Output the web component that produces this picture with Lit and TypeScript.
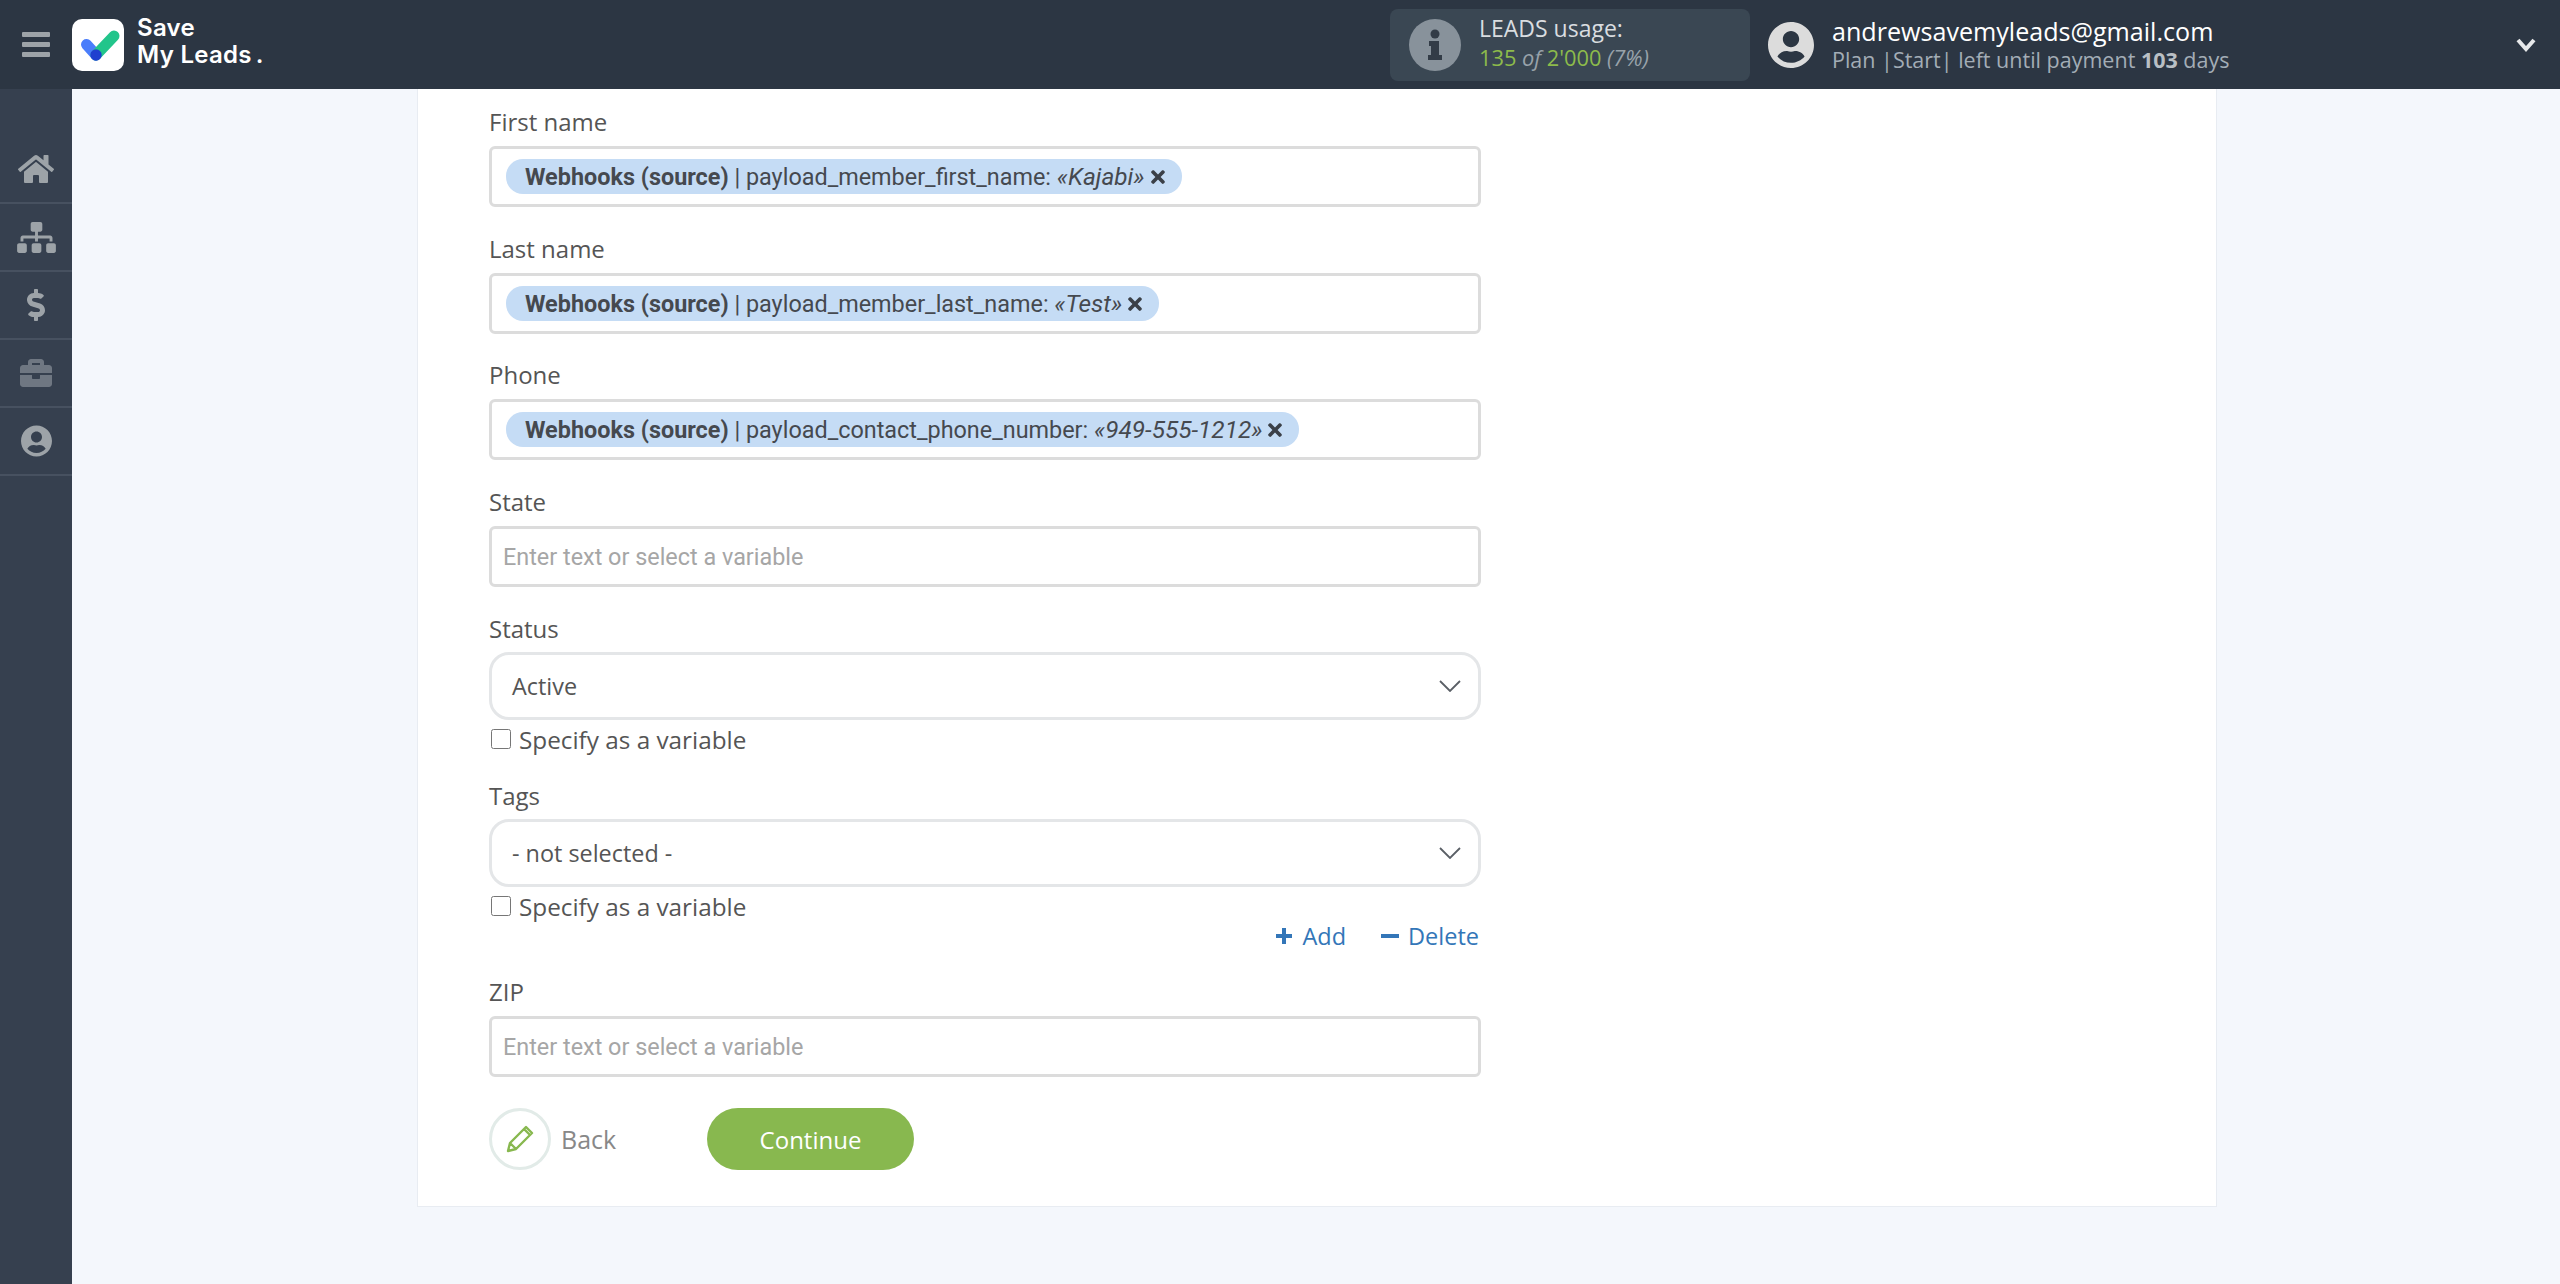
import { LitElement, html, css, svg } from "lit";
import { customElement } from "lit/decorators.js";

const ICONS = {
  home: ["0 0 576 512", "M280.37 148.26L96 300.11V464a16 16 0 0 0 16 16l112.06-.29a16 16 0 0 0 15.92-16V368a16 16 0 0 1 16-16h64a16 16 0 0 1 16 16v95.64a16 16 0 0 0 16 16.05L464 480a16 16 0 0 0 16-16V300L295.67 148.26a12.19 12.19 0 0 0-15.3 0zM571.6 251.47L488 182.56V44.05a12 12 0 0 0-12-12h-56a12 12 0 0 0-12 12v72.61L318.47 43a48 48 0 0 0-61 0L4.34 251.47a12 12 0 0 0-1.6 16.9l25.5 31A12 12 0 0 0 45.15 301l235.22-193.74a12.19 12.19 0 0 1 15.3 0L530.9 301a12 12 0 0 0 16.9-1.6l25.5-31a12 12 0 0 0-1.7-16.93z"],
  sitemap: ["0 0 640 512", "M128 352H32c-17.67 0-32 14.33-32 32v96c0 17.67 14.33 32 32 32h96c17.67 0 32-14.33 32-32v-96c0-17.67-14.33-32-32-32zm-24-80h192v48h48v-48h192v48h48v-57.59c0-21.17-17.23-38.41-38.41-38.41H344v-64h40c17.67 0 32-14.33 32-32V32c0-17.67-14.33-32-32-32H256c-17.67 0-32 14.33-32 32v96c0 17.67 14.33 32 32 32h40v64H94.41C73.23 224 56 241.23 56 262.41V320h48v-48zm264 80h-96c-17.67 0-32 14.33-32 32v96c0 17.67 14.33 32 32 32h96c17.67 0 32-14.33 32-32v-96c0-17.67-14.33-32-32-32zm240 0h-96c-17.67 0-32 14.33-32 32v96c0 17.67 14.33 32 32 32h96c17.67 0 32-14.33 32-32v-96c0-17.67-14.33-32-32-32z"],
  dollar: ["0 0 288 512", "M209.2 233.4l-108-31.6C88.7 198.2 80 186.5 80 173.5c0-16.3 13.2-29.5 29.5-29.5h66.3c12.2 0 24.2 3.7 34.2 10.5 6.1 4.1 14.3 3.1 19.5-2l34.8-34c7.1-6.9 6.1-18.4-1.8-24.5C238 74.8 207.4 64.1 176 64V16c0-8.8-7.2-16-16-16h-32c-8.8 0-16 7.2-16 16v48h-2.5C45.8 64-5.4 118.7.5 183.6c4.2 46.1 39.4 83.6 83.8 96.6l102.5 30c12.5 3.7 21.2 15.3 21.2 28.3 0 16.3-13.2 29.5-29.5 29.5h-66.3C100 368 88 364.3 78 357.5c-6.1-4.1-14.3-3.1-19.5 2l-34.8 34c-7.1 6.9-6.1 18.4 1.8 24.5 24.5 19.2 55.1 29.9 86.5 30v48c0 8.8 7.2 16 16 16h32c8.8 0 16-7.2 16-16v-48.2c46.6-.9 90.3-28.6 105.7-72.7 21.5-61.6-14.6-124.8-72.5-141.7z"],
  briefcase: ["0 0 512 512", "M320 336c0 8.84-7.16 16-16 16h-96c-8.84 0-16-7.16-16-16v-48H0v144c0 25.6 22.4 48 48 48h416c25.6 0 48-22.4 48-48V288H320v48zm144-208h-80V80c0-25.6-22.4-48-48-48H176c-25.6 0-48 22.4-48 48v48H48c-25.6 0-48 22.4-48 48v80h512v-80c0-25.6-22.4-48-48-48zm-144 0H192V96h128v32z"],
  user: ["0 0 496 512", "M248 8C111 8 0 119 0 256s111 248 248 248 248-111 248-248S385 8 248 8zm0 96c48.6 0 88 39.4 88 88s-39.4 88-88 88-88-39.4-88-88 39.4-88 88-88zm0 344c-58.7 0-111.3-26.6-146.5-68.2 18.8-35.4 55.6-59.8 98.5-59.8 2.4 0 4.8.4 7.1 1.1 13 4.2 26.6 6.9 40.9 6.9 14.3 0 28-2.7 40.9-6.9 2.3-.7 4.7-1.1 7.1-1.1 42.9 0 79.7 24.4 98.5 59.8C359.3 421.4 306.7 448 248 448z"],
  times: ["0 0 352 512", "M242.72 256l100.07-100.07c12.28-12.28 12.28-32.19 0-44.48l-22.24-22.24c-12.28-12.28-32.19-12.28-44.48 0L176 189.28 75.93 89.21c-12.28-12.28-32.19-12.28-44.48 0L9.21 111.45c-12.28 12.28-12.28 32.19 0 44.48L109.28 256 9.21 356.07c-12.28 12.28-12.28 32.19 0 44.48l22.24 22.24c12.28 12.28 32.2 12.28 44.48 0L176 322.72l100.07 100.07c12.28 12.28 32.2 12.28 44.48 0l22.24-22.24c12.28-12.28 12.28-32.19 0-44.48L242.72 256z"],
};

const icon = (name: keyof typeof ICONS, cls: string) => {
  const [vb, d] = ICONS[name];
  return html`<svg class=${cls} viewBox=${vb} fill="currentColor" aria-hidden="true">${svg`<path d=${d}></path>`}</svg>`;
};

const chevron = html`<svg class="arrow" viewBox="0 0 22 12" fill="none" stroke="#5a5f66" stroke-width="1.8" aria-hidden="true"><path d="M1 1l10 10L21 1"></path></svg>`;

@customElement("app-root")
export class AppRoot extends LitElement {
  static styles = css`
    :host { display: block; height: 1284px; overflow: hidden; background: #f4f7fc; font-family: "Open Sans", sans-serif; color: #555; }
    * { box-sizing: border-box; }
    .top { height: 89px; background: #2c3643; display: flex; align-items: center; }
    .burger { width: 72px; display: flex; flex-direction: column; align-items: center; gap: 5px; }
    .burger i { display: block; width: 28px; height: 5px; border-radius: 1px; background: #9da3a8; }
    .logo { width: 52px; height: 52px; flex: none; }
    .brand { margin-left: 13px; margin-top: -7px; font: 600 24px/27px Inter, sans-serif; color: #fff; letter-spacing: .3px; width: 200px; flex: none; }
    .brand span { margin-left: 4px; }
    .usage { margin-left: 1053px; width: 360px; height: 72px; background: #3a4753; border-radius: 8px; display: flex; align-items: center; padding-left: 19px; flex: none; }
    .info { width: 52px; height: 52px; flex: none; }
    .usage-text { margin-left: 18px; line-height: 29px; color: #d9dde0; }
    .usage-title { font-size: 23px; margin-top: -3px; }
    .usage-num { font-size: 21.8px; color: #8dbb4b; }
    .usage-num em, .usage-num .pct { color: #98a2aa; font-style: italic; }
    .avatar { width: 46px; height: 48px; margin-left: 18px; color: #dcdcdc; flex: none; }
    .acct { margin-left: 18px; margin-top: -2px; }
    .email { font-size: 25.1px; line-height: 32px; color: #fff; }
    .plan { font-size: 21.5px; line-height: 25px; color: #a3adb6; }
    .plan b { font-weight: 700; color: #b9bfc4; }
    .caret { margin-left: auto; margin-right: 24px; width: 20px; height: 14px; }
    .body { display: flex; height: 1195px; }
    .side { width: 72px; flex: none; background: #36404f; padding-top: 47px; }
    .side div { height: 68px; border-bottom: 2px solid #475160; display: flex; align-items: center; justify-content: center; color: #9da3a8; }
    .side div.dim { color: #6f7782; }
    .i-home { width: 36px; height: 32px; }
    .i-sitemap { width: 39px; height: 31px; }
    .i-dollar { width: 18px; height: 32px; }
    .i-briefcase { width: 32px; height: 32px; }
    .i-user { width: 31px; height: 32px; }
    .main { flex: 1; padding-left: 345px; }
    .card { width: 1800px; height: 1118px; background: #fff; border: 1px solid #e8ecf2; border-top: 0; padding: 17px 0 0 71px; }
    .form { width: 992px; display: flex; flex-direction: column; }
    .label { font-size: 24px; line-height: 32px; height: 32px; margin-bottom: 8px; color: #555; }
    .box { height: 61px; border: 3px solid #dcdcdc; border-radius: 6px; display: flex; align-items: center; padding: 0 11px 0 11px; margin-bottom: 26px; font: 23.4px Roboto, sans-serif; }
    .box.tight { margin-bottom: 25px; }
    .ph { color: #a6a6a6; }
    .chip { height: 35px; margin-left: 3px; border-radius: 17px; background: #c5dcf5; color: #45494f; display: inline-flex; align-items: center; padding: 0 17px 0 19px; white-space: pre; }
    .chip b { font-weight: 700; }
    .chip em { font-style: italic; font-size: 24.4px; }
    .i-times { width: 14px; height: 20px; margin-left: 6px; color: #3b4048; }
    .select { height: 68px; margin-top: -1px; margin-bottom: 1px; border: 3px solid #e4e6e8; border-radius: 20px; display: flex; align-items: center; justify-content: space-between; padding: 0 17px 1px 20px; font-size: 23.4px; color: #555; }
    .arrow { width: 22px; height: 12px; }
    .check { display: flex; align-items: center; height: 40px; margin-top: -2px; font-size: 24.3px; font-weight: 500; color: #555; }
    .check input { width: 20px; height: 20px; margin: 0 8px 0 2px; }
    .gap { height: 21px; }
    .actions { display: flex; justify-content: flex-end; align-items: center; height: 36px; padding-right: 2px; margin-top: -8px; color: #3376b8; font-size: 23.5px; gap: 35px; }
    .actions span { display: inline-flex; align-items: center; gap: 9px; }
    .actions svg { width: 18px; height: 18px; }
    .tail { height: 22px; }
    .buttons { display: flex; align-items: center; margin-top: 5px; }
    .back { width: 62px; height: 62px; border: 3px solid #e2ebe8; border-radius: 50%; display: flex; align-items: center; justify-content: center; flex: none; }
    .back svg { width: 30px; height: 30px; }
    .back-text { margin-left: 10px; font-size: 25px; color: #888; width: 146px; }
    .go { width: 207px; height: 62px; border-radius: 31px; background: #88b84f; color: #fff; font-size: 24px; display: flex; align-items: center; justify-content: center; }
  `;

  private chip(field: string, value: string) {
    return html`<span class="chip"><b>Webhooks (source)</b> | ${field}: <em>«${value}»</em>${icon("times", "i-times")}</span>`;
  }

  render() {
    return html`
      <div class="top">
        <div class="burger"><i></i><i></i><i></i></div>
        <svg class="logo" viewBox="0 0 52 52" aria-hidden="true">
          <rect width="52" height="52" rx="10" fill="#fff"></rect>
          <path d="M14.5 25.5L24 36" stroke="#4a7dfb" stroke-width="11" stroke-linecap="round" fill="none"></path>
          <path d="M24 36L42 17" stroke="#22c58b" stroke-width="11" stroke-linecap="round" fill="none"></path>
          <circle cx="24" cy="36" r="5.7" fill="#1f3fcf"></circle>
        </svg>
        <div class="brand">Save<br />My Leads<span>.</span></div>
        <div class="usage">
          <svg class="info" viewBox="0 0 52 52" aria-hidden="true">
            <circle cx="26" cy="26" r="26" fill="#88929b"></circle>
            <circle cx="26" cy="15" r="4.5" fill="#333c47"></circle>
            <path d="M20 22h10v14h3v5H19v-5h3v-9h-2z" fill="#333c47"></path>
          </svg>
          <div class="usage-text">
            <div class="usage-title">LEADS usage:</div>
            <div class="usage-num">135 <em>of</em> 2'000 <span class="pct">(7%)</span></div>
          </div>
        </div>
        ${icon("user", "avatar")}
        <div class="acct">
          <div class="email">andrewsavemyleads@gmail.com</div>
          <div class="plan">Plan |Start| left until payment <b>103</b> days</div>
        </div>
        <svg class="caret" viewBox="0 0 20 14" fill="none" stroke="#e6e8ea" stroke-width="4" aria-hidden="true"><path d="M2 2l8 9 8-9"></path></svg>
      </div>
      <div class="body">
        <nav class="side">
          <div>${icon("home", "i-home")}</div>
          <div>${icon("sitemap", "i-sitemap")}</div>
          <div>${icon("dollar", "i-dollar")}</div>
          <div class="dim">${icon("briefcase", "i-briefcase")}</div>
          <div>${icon("user", "i-user")}</div>
        </nav>
        <main class="main">
          <div class="card">
            <div class="form">
              <div class="label">First name</div>
              <div class="box">${this.chip("payload_member_first_name", "Kajabi")}</div>
              <div class="label">Last name</div>
              <div class="box tight">${this.chip("payload_member_last_name", "Test")}</div>
              <div class="label">Phone</div>
              <div class="box">${this.chip("payload_contact_phone_number", "949-555-1212")}</div>
              <div class="label">State</div>
              <div class="box"><span class="ph">Enter text or select a variable</span></div>
              <div class="label">Status</div>
              <div class="select"><span>Active</span>${chevron}</div>
              <label class="check"><input type="checkbox" />Specify as a variable</label>
              <div class="gap"></div>
              <div class="label">Tags</div>
              <div class="select"><span>- not selected -</span>${chevron}</div>
              <label class="check"><input type="checkbox" />Specify as a variable</label>
              <div class="actions">
                <span><svg viewBox="0 0 18 18" fill="#3376b8" aria-hidden="true"><path d="M7 1h4v6h6v4h-6v6H7v-6H1V7h6z"></path></svg>Add</span>
                <span><svg viewBox="0 0 18 18" fill="#3376b8" aria-hidden="true"><path d="M0 7h18v4H0z"></path></svg>Delete</span>
              </div>
              <div class="tail"></div>
              <div class="label">ZIP</div>
              <div class="box"><span class="ph">Enter text or select a variable</span></div>
              <div class="buttons">
                <div class="back">
                  <svg viewBox="0 0 30 30" fill="none" stroke="#88b84f" stroke-width="2.4" stroke-linejoin="round" aria-hidden="true"><path d="M3 27l2-8L19 5l6 6-14 14zM5 19l6 6M21 3l6 6-2 2-6-6z"></path></svg>
                </div>
                <div class="back-text">Back</div>
                <div class="go">Continue</div>
              </div>
            </div>
          </div>
        </main>
      </div>
    `;
  }
}
